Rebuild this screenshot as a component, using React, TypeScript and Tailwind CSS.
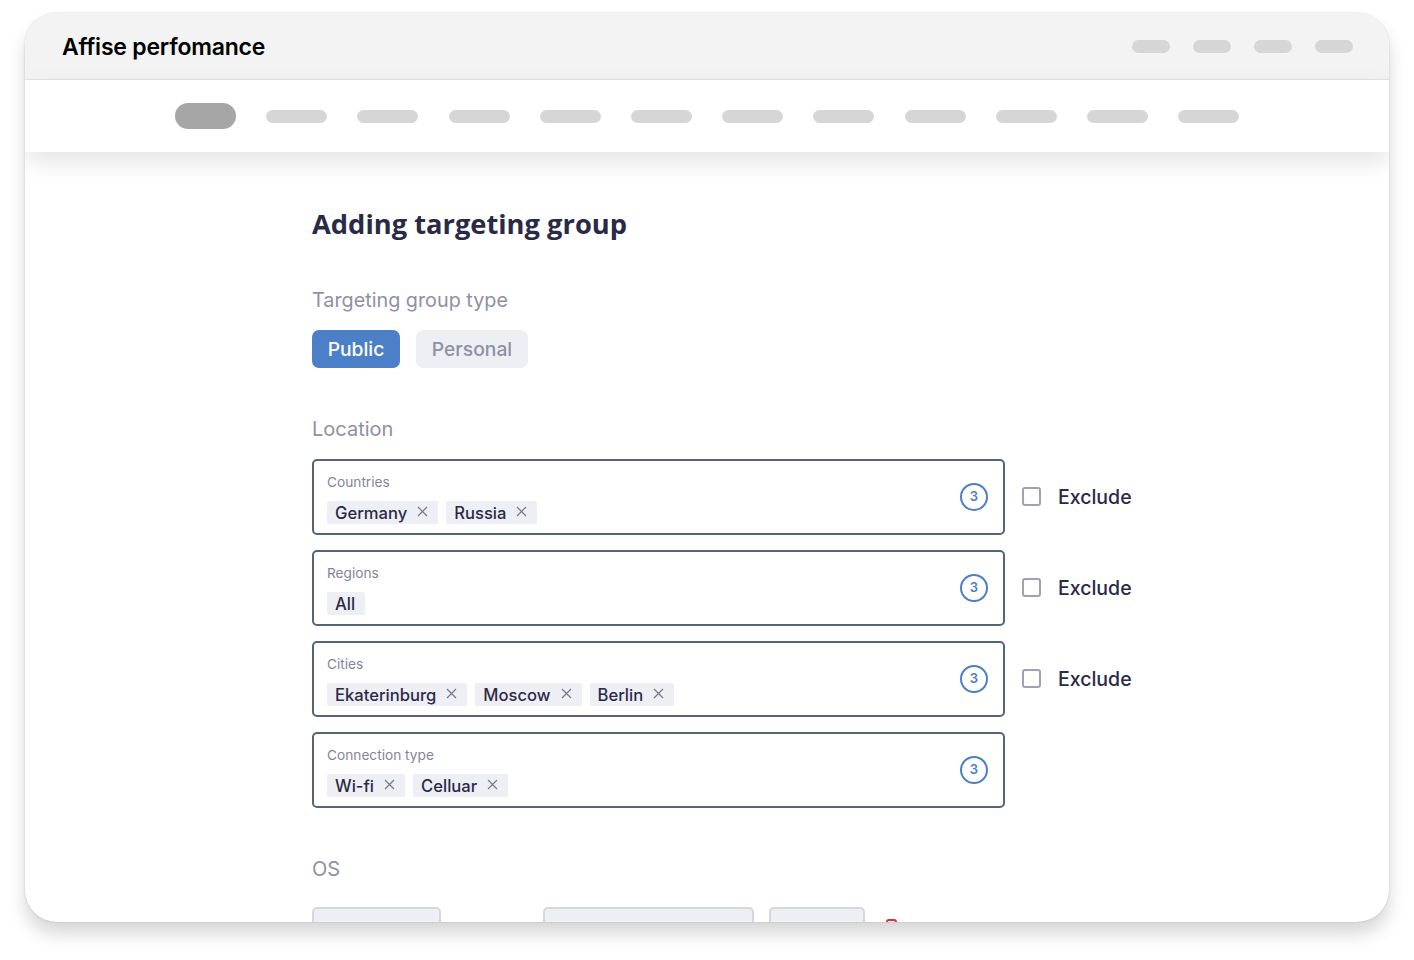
const bodyFont = 'font-["Inter",sans-serif]'

const topPills = [0, 1, 2, 3]
const navPills = [0, 1, 2, 3, 4, 5, 6, 7, 8, 9, 10]

const fields = [
  { label: 'Countries', tags: ['Germany', 'Russia'], exclude: true },
  { label: 'Regions', tags: ['All'], exclude: true, noClose: true },
  { label: 'Cities', tags: ['Ekaterinburg', 'Moscow', 'Berlin'], exclude: true },
  { label: 'Connection type', tags: ['Wi-fi', 'Celluar'], exclude: false },
]

const CloseIcon = () => (
  <svg width="11" height="11" viewBox="0 0 11 11" fill="none" className="shrink-0 -translate-y-px">
    <path d="M1 1L10 10M10 1L1 10" stroke="#77788c" strokeWidth="1.2" />
  </svg>
)

const Tag = ({ text, noClose }: { text: string; noClose?: boolean }) => (
  <div className="flex h-[23px] items-center gap-[10px] rounded-[2px] bg-[#eeeff4] pl-2 pr-[10px] text-[16.6px] font-medium text-[#2a2a47]">
    <span className="translate-y-px">{text}</span>
    {!noClose && <CloseIcon />}
  </div>
)

const CountBadge = () => (
  <div className="flex h-[28px] w-[28px] items-center justify-center rounded-full border-2 border-[#4b7fc8] text-[13px] font-semibold text-[#4b7fc8]">
    3
  </div>
)

const Field = ({ label, tags, exclude, noClose }: { label: string; tags: string[]; exclude: boolean; noClose?: boolean }) => (
  <div className="flex items-center">
    <div className="flex h-[76px] w-[693px] items-center justify-between rounded-[5px] border-2 border-[#55647b] pl-[13px] pr-[15px]">
      <div className="flex flex-col gap-[11px] pt-[4px]">
        <div className="text-[13.7px] leading-[16px] text-[#84859a]">{label}</div>
        <div className="flex gap-[8px]">
          {tags.map((t) => (
            <Tag key={t} text={t} noClose={noClose} />
          ))}
        </div>
      </div>
      <CountBadge />
    </div>
    {exclude && (
      <div className="ml-[17px] flex items-center gap-[17px]">
        <div className="h-[19px] w-[19px] -translate-y-px rounded-[3px] border-2 border-[#a0a1b2]" />
        <span className="translate-y-px text-[19.5px] font-medium text-[#2a2a47]">Exclude</span>
      </div>
    )}
  </div>
)

const App = () => {
  return (
    <div className={`h-[960px] w-[1414px] overflow-hidden bg-white pl-[25px] pt-[13px] ${bodyFont}`}>
      <div className="flex h-[909px] w-[1364px] flex-col overflow-hidden rounded-[32px] bg-white shadow-[0_12px_18px_rgba(0,0,0,0.16),0_0_2px_rgba(0,0,0,0.2)]">
        <div className="flex h-[67px] shrink-0 items-center justify-between border-b border-[#e2e2e2] bg-[#f3f3f3] pl-[37px] pr-[36px]">
          <div className="pt-[2px] text-[23px] font-semibold tracking-[-0.2px] text-black">Affise perfomance</div>
          <div className="flex gap-[23px]">
            {topPills.map((p) => (
              <div key={p} className="h-[13px] w-[38px] rounded-full bg-[#d6d6d6]" />
            ))}
          </div>
        </div>

        <div className="relative z-10 flex h-[72px] shrink-0 items-center gap-[30.2px] bg-white pl-[150px] shadow-[0_10px_24px_rgba(0,0,0,0.11)]">
          <div className="h-[26px] w-[61px] rounded-full bg-[#a6a6a6]" />
          {navPills.map((p) => (
            <div key={p} className="h-[13px] w-[61px] rounded-full bg-[#d6d6d6]" />
          ))}
        </div>

        <div className="flex flex-col pl-[287px]">
          <h1 className='mt-[52px] font-["Open_Sans",sans-serif] text-[27.3px] leading-[40px] font-bold text-[#2a2a47]'>
            Adding targeting group
          </h1>

          <div className="mt-[44px] text-[19.8px] leading-[24px] text-[#8f90a3]">Targeting group type</div>
          <div className="mt-[18px] flex gap-4">
            <div className="flex h-[38px] w-[88px] items-center justify-center rounded-[7px] bg-[#4b7fc8] text-[19.3px] font-medium text-white">
              Public
            </div>
            <div className="flex h-[38px] w-[112px] items-center justify-center rounded-[7px] bg-[#eeeff4] text-[19.3px] font-medium text-[#8f90a3]">
              Personal
            </div>
          </div>

          <div className="mt-[49px] text-[20px] leading-[24px] text-[#8f90a3]">Location</div>
          <div className="mt-[18px] flex flex-col gap-[15px]">
            {fields.map((f) => (
              <Field key={f.label} {...f} />
            ))}
          </div>

          <div className="mt-[49px] text-[20px] leading-[24px] text-[#8f90a3]">OS</div>
          <div className="mt-[26px] flex items-start">
            <div className="h-[40px] w-[129px] rounded-[5px] border-2 border-[#d5d7de] bg-[#eeeff4]" />
            <div className="ml-[102px] h-[40px] w-[211px] rounded-[5px] border-2 border-[#d5d7de] bg-[#eeeff4]" />
            <div className="ml-[15px] h-[40px] w-[96px] rounded-[5px] border-2 border-[#d5d7de] bg-[#eeeff4]" />
            <div className="ml-[21px] mt-[12px] h-[12px] w-[11px] rounded-t-[3px] border-2 border-[#d9323f]" />
          </div>
        </div>
      </div>
    </div>
  )
}

export default App
